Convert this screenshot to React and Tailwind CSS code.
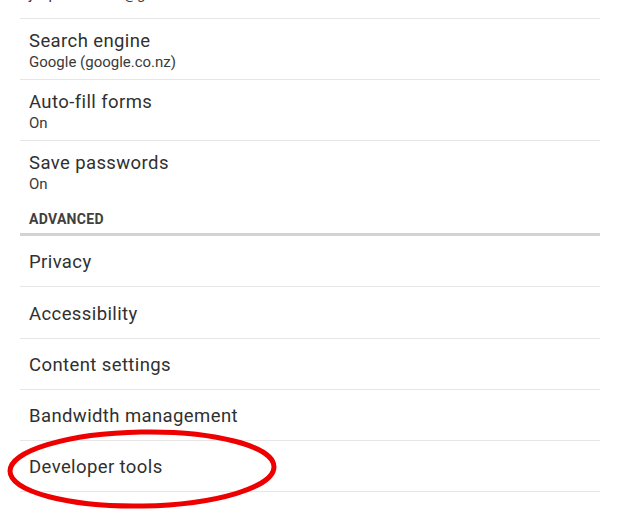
import React from 'react';

const topRows = [
    { title: 'Accounts', sub: 'jasperholden7@gmail.com', first: true },
    { title: 'Search engine', sub: 'Google (google.co.nz)' },
    { title: 'Auto-fill forms', sub: 'On' },
    { title: 'Save passwords', sub: 'On', last: true },
];

// heights incl. the 1px divider, read off the reference
const advancedRows = [
    { label: 'Privacy', h: 'h-[51px]' },
    { label: 'Accessibility', h: 'h-[52px]' },
    { label: 'Content settings', h: 'h-[51px]' },
    { label: 'Bandwidth management', h: 'h-[51px]' },
    { label: 'Developer tools', h: 'h-[51px]' },
];

function TwoLineRow({ title, sub, first, last }) {
    return (
        <div className={`h-[61px] pl-[9px] ${first ? 'pt-[4px]' : 'pt-[11px]'} ${last ? '' : 'border-b border-[#e6e6e6]'}`}>
            <div className="text-[18.5px] leading-[22px] tracking-[0.4px] text-[#303030]">{title}</div>
            <div className="text-[15px] leading-[20px] text-[#3a3a3a]">{sub}</div>
        </div>
    );
}

function App() {
    return (
        <div className="relative h-[520px] w-[621px] overflow-hidden bg-white" style={{ fontFamily: 'Roboto, "Noto Sans", sans-serif' }}>
            <div className="ml-[20px] mt-[-42px] w-[580px]">
                {topRows.map(row => (
                    <TwoLineRow key={row.title} {...row} />
                ))}

                <div className="h-[34px] border-b-[3px] border-[#d3d3d3] pl-[9px] pt-[9px] text-[14px] font-bold leading-[16px] tracking-[0.3px] text-[#404040]">
                    ADVANCED
                </div>

                {advancedRows.map(row => (
                    <div key={row.label} className={`flex ${row.h} items-center border-b border-[#e6e6e6] pl-[9px] pt-[4px] text-[18.5px] tracking-[0.4px] text-[#303030]`}>
                        {row.label}
                    </div>
                ))}
            </div>

            {/* red marker circle round "Developer tools" */}
            <svg className="pointer-events-none absolute left-0 top-0" width="621" height="520" viewBox="0 0 621 520">
                <ellipse cx="142" cy="469" rx="132" ry="37" fill="none" stroke="#ee0000" strokeWidth="5" transform="rotate(-1 142 469)" />
            </svg>
        </div>
    );
}

export default App;
